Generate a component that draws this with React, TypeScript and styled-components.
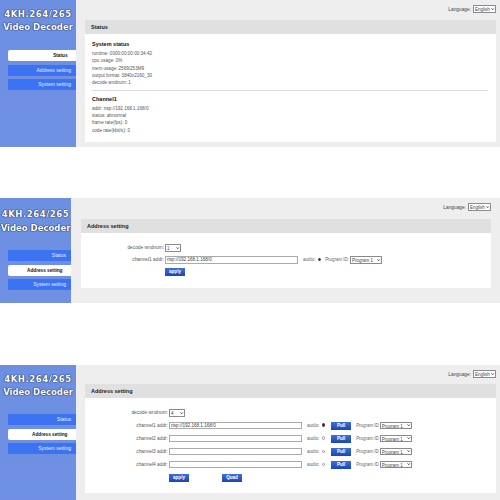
import React from 'react';
import styled, {createGlobalStyle} from 'styled-components';

const GlobalStyle = createGlobalStyle`
  html, body {
    margin: 0;
    padding: 0;
    background: #ffffff;
  }
  body {
    width: 500px;
    height: 500px;
    overflow: hidden;
    font-family: "Liberation Sans", Arial, sans-serif;
  }
`;

const Page = styled.div`
  display: flex;
  flex-direction: column;
  width: 500px;
`;

const Screen = styled.section<{$height: number; $gap: number}>`
  display: flex;
  height: ${(props) => props.$height}px;
  margin-bottom: ${(props) => props.$gap}px;
  background: #eeeeee;
`;

const Sidebar = styled.aside<{$width: number; $titleTop: number; $navGap: number}>`
  width: ${(props) => props.$width}px;
  flex: none;
  background: linear-gradient(180deg, #6d8fe2 0%, #6f90e3 100%);
  padding-top: ${(props) => props.$titleTop}px;
  box-sizing: border-box;

  nav {
    margin-top: ${(props) => props.$navGap}px;
  }
`;

const Title = styled.h1`
  margin: 0;
  font-family: "DejaVu Sans", Verdana, sans-serif;
  font-weight: 700;
  font-size: 8.5px;
  line-height: 13.5px;
  text-align: center;
  white-space: nowrap;
  color: #ffffff;
  text-shadow: 0 0 1px #1d2c58, 0 0 1px #1d2c58, 0 0 1px #1d2c58;
`;

const TitleLine = styled.div<{$spacing: number}>`
  letter-spacing: ${(props) => props.$spacing}px;
`;

const Nav = styled.nav`
  display: flex;
  flex-direction: column;
  gap: 3.5px;
  padding-left: 8px;
`;

const NavItem = styled.div<{$active?: boolean}>`
  height: 11px;
  line-height: 11px;
  padding-right: ${(props) => (props.$active ? '8.5px' : '5px')};
  text-align: right;
  font-size: ${(props) => (props.$active ? '4.7px' : '5px')};
  font-weight: ${(props) => (props.$active ? 700 : 400)};
  color: ${(props) => (props.$active ? '#111111' : '#e8eeff')};
  background: ${(props) => (props.$active ? '#ffffff' : '#3c73f2')};
  border-radius: ${(props) => (props.$active ? '2px 0 0 2px' : '0')};
`;

const Main = styled.main<{$left: number; $right: number}>`
  flex: 1;
  min-width: 0;
  padding: 5px ${(props) => props.$right}px 0 ${(props) => props.$left}px;
`;

const LanguageBar = styled.div<{$bottom: number}>`
  display: flex;
  justify-content: flex-end;
  align-items: center;
  gap: 2px;
  height: 8px;
  margin-bottom: ${(props) => props.$bottom}px;
  font-size: 4.8px;
  color: #444444;
`;

const SelectBox = styled.div<{$width: number}>`
  position: relative;
  flex: none;
  width: ${(props) => props.$width}px;
  height: 7.5px;

  svg {
    position: absolute;
    top: 2.5px;
    right: 1.2px;
    width: 3.4px;
    height: 2.4px;
    pointer-events: none;
  }
`;

const NativeSelect = styled.select`
  display: block;
  appearance: none;
  width: 100%;
  height: 100%;
  padding: 0 0 0 1px;
  margin: 0;
  font-family: "Liberation Sans", Arial, sans-serif;
  font-size: 4.5px;
  line-height: 7px;
  color: #444444;
  background: #ffffff;
  border: 0.5px solid #8a8a8a;
  border-radius: 0.5px;
`;

const Panel = styled.div`
  background: #ffffff;
`;

const PanelHeader = styled.div`
  height: 14px;
  line-height: 14px;
  padding-left: 6px;
  background: #e0e0e0;
  font-size: 5.5px;
  font-weight: 700;
  color: #222222;
`;

const StatusBody = styled.div<{$height: number}>`
  height: ${(props) => props.$height}px;
  padding: 6px 8px 0 7px;
  box-sizing: border-box;
`;

const SectionTitle = styled.h2`
  margin: 0 0 2px;
  height: 8px;
  line-height: 8px;
  font-size: 5.5px;
  font-weight: 700;
  color: #111111;
`;

const StatusLine = styled.div`
  height: 7.35px;
  line-height: 7.35px;
  font-size: 4.6px;
  color: #555555;
`;

const Divider = styled.hr`
  height: 1px;
  margin: 3px 0 4px;
  border: 0;
  background: #dddddd;
`;

const FormBody = styled.div<{$height: number; $top: number; $label: number}>`
  display: grid;
  grid-template-columns: ${(props) => props.$label}px 1fr;
  grid-auto-rows: min-content;
  align-content: start;
  column-gap: 1px;
  height: ${(props) => props.$height}px;
  padding-top: ${(props) => props.$top}px;
  box-sizing: border-box;
`;

const FieldLabel = styled.div<{$rowHeight: number}>`
  height: ${(props) => props.$rowHeight}px;
  line-height: 7.5px;
  text-align: right;
  font-size: 4.8px;
  color: #555555;
`;

const FieldRow = styled.div<{$rowHeight: number}>`
  display: flex;
  align-items: flex-start;
  height: ${(props) => props.$rowHeight}px;
  line-height: 7.5px;
  font-size: 4.6px;
  color: #666666;
`;

const AddressInput = styled.input`
  width: 133px;
  height: 7.5px;
  margin: 0 5px 0 0;
  padding: 0 1px;
  box-sizing: border-box;
  flex: none;
  font-family: "Liberation Sans", Arial, sans-serif;
  font-size: 4.6px;
  color: #444444;
  background: #ffffff;
  border: 0.5px solid #aaaaaa;
`;

const Radio = styled.span<{$checked?: boolean}>`
  width: 3.6px;
  height: 3.6px;
  margin: 1.9px 2px 0 2px;
  flex: none;
  box-sizing: border-box;
  border-radius: 50%;
  border: 0.5px solid ${(props) => (props.$checked ? '#333333' : '#999999')};
  background: ${(props) => (props.$checked ? '#333333' : '#ffffff')};
`;

const BlueButton = styled.button`
  width: 20px;
  height: 8px;
  padding: 0;
  flex: none;
  border: 0;
  background: linear-gradient(180deg, #3f6fd8 0%, #1a46b4 100%);
  color: #ffffff;
  font-family: "Liberation Sans", Arial, sans-serif;
  font-size: 4.6px;
  font-weight: 700;
  line-height: 8px;
`;

const PullButton = styled(BlueButton)`
  margin-left: 4px;
`;

const ProgramLabel = styled.span<{$left: number}>`
  margin: 0 1px 0 ${(props) => props.$left}px;
  font-size: 4.45px;
  white-space: nowrap;
`;

const Actions = styled.div<{$gap: number}>`
  grid-column: 2;
  display: flex;
  gap: ${(props) => props.$gap}px;
`;

const TitleBlock = () => (
    <Title>
        <TitleLine $spacing={0.55}>4KH.264/265</TitleLine>
        <TitleLine $spacing={0}>Video Decoder</TitleLine>
    </Title>
);

const Menu: React.FC<{active: string}> = ({active}) => (
    <Nav>
        {['Status', 'Address setting', 'System setting'].map((item) => (
            <NavItem key={item} $active={item === active}>
                {item}
            </NavItem>
        ))}
    </Nav>
);

const Select: React.FC<{width: number; label: string}> = ({width, label}) => (
    <SelectBox $width={width}>
        <NativeSelect>
            <option>{label}</option>
        </NativeSelect>
        <svg viewBox="0 0 8 6">
            <path d="M1 1l3 3.4L7 1" fill="none" stroke="#222222" strokeWidth="1.8" />
        </svg>
    </SelectBox>
);

const Language: React.FC<{bottom: number}> = ({bottom}) => (
    <LanguageBar $bottom={bottom}>
        Language:
        <Select width={23} label="English" />
    </LanguageBar>
);

const channels = [
    {name: 'channel1 addr:', value: 'rtsp://192.168.1.168/0', checked: true},
    {name: 'channel2 addr:', value: '', checked: false},
    {name: 'channel3 addr:', value: '', checked: false},
    {name: 'channel4 addr:', value: '', checked: false},
];

const App: React.FC = () => {
    return (
        <Page>
            <GlobalStyle />

            <Screen $height={147} $gap={51}>
                <Sidebar $width={76} $titleTop={7.5} $navGap={15.5}>
                    <TitleBlock />
                    <Menu active="Status" />
                </Sidebar>
                <Main $left={9} $right={4}>
                    <Language bottom={7} />
                    <Panel>
                        <PanelHeader>Status</PanelHeader>
                        <StatusBody $height={108}>
                            <SectionTitle>System status</SectionTitle>
                            <StatusLine>runtime: 0000:00:00:00:34:42</StatusLine>
                            <StatusLine>cpu usage: 0%</StatusLine>
                            <StatusLine>mem usage: 2569/253M9</StatusLine>
                            <StatusLine>output format: 3840x2160_30</StatusLine>
                            <StatusLine>decode wndnum: 1</StatusLine>
                            <Divider />
                            <SectionTitle>Channel1</SectionTitle>
                            <StatusLine>addr: rtsp://192.168.1.168/0</StatusLine>
                            <StatusLine>status: abnormal</StatusLine>
                            <StatusLine>frame rate(fps): 0</StatusLine>
                            <StatusLine>code rate(kbit/s): 0</StatusLine>
                        </StatusBody>
                    </Panel>
                </Main>
            </Screen>

            <Screen $height={105} $gap={62}>
                <Sidebar $width={71} $titleTop={10} $navGap={15}>
                    <TitleBlock />
                    <Menu active="Address setting" />
                </Sidebar>
                <Main $left={10} $right={9}>
                    <Language bottom={8} />
                    <Panel>
                        <PanelHeader>Address setting</PanelHeader>
                        <FormBody $height={55} $top={11} $label={83}>
                            <FieldLabel $rowHeight={12}>decode wndnum:</FieldLabel>
                            <FieldRow $rowHeight={12}>
                                <Select width={16} label="1" />
                            </FieldRow>
                            <FieldLabel $rowHeight={12}>channel1 addr:</FieldLabel>
                            <FieldRow $rowHeight={12}>
                                <AddressInput defaultValue="rtsp://192.168.1.168/0" />
                                audio:
                                <Radio $checked />
                                <ProgramLabel $left={2}>Program ID:</ProgramLabel>
                                <Select width={32} label="Program 1" />
                            </FieldRow>
                            <Actions $gap={0}>
                                <BlueButton>apply</BlueButton>
                            </Actions>
                        </FormBody>
                    </Panel>
                </Main>
            </Screen>

            <Screen $height={135} $gap={0}>
                <Sidebar $width={76} $titleTop={7.5} $navGap={14.5}>
                    <TitleBlock />
                    <Menu active="Address setting" />
                </Sidebar>
                <Main $left={9} $right={4}>
                    <Language bottom={6} />
                    <Panel>
                        <PanelHeader>Address setting</PanelHeader>
                        <FormBody $height={95} $top={11} $label={83}>
                            <FieldLabel $rowHeight={12.5}>decode wndnum:</FieldLabel>
                            <FieldRow $rowHeight={12.5}>
                                <Select width={16} label="4" />
                            </FieldRow>
                            {channels.map((channel) => (
                                <React.Fragment key={channel.name}>
                                    <FieldLabel $rowHeight={13.1}>{channel.name}</FieldLabel>
                                    <FieldRow $rowHeight={13.1}>
                                        <AddressInput defaultValue={channel.value} />
                                        audio:
                                        <Radio $checked={channel.checked} />
                                        <PullButton>Pull</PullButton>
                                        <ProgramLabel $left={5}>Program ID</ProgramLabel>
                                        <Select width={32} label="Program 1" />
                                    </FieldRow>
                                </React.Fragment>
                            ))}
                            <Actions $gap={33}>
                                <BlueButton>apply</BlueButton>
                                <BlueButton>Quad</BlueButton>
                            </Actions>
                        </FormBody>
                    </Panel>
                </Main>
            </Screen>
        </Page>
    );
};

export default App;
